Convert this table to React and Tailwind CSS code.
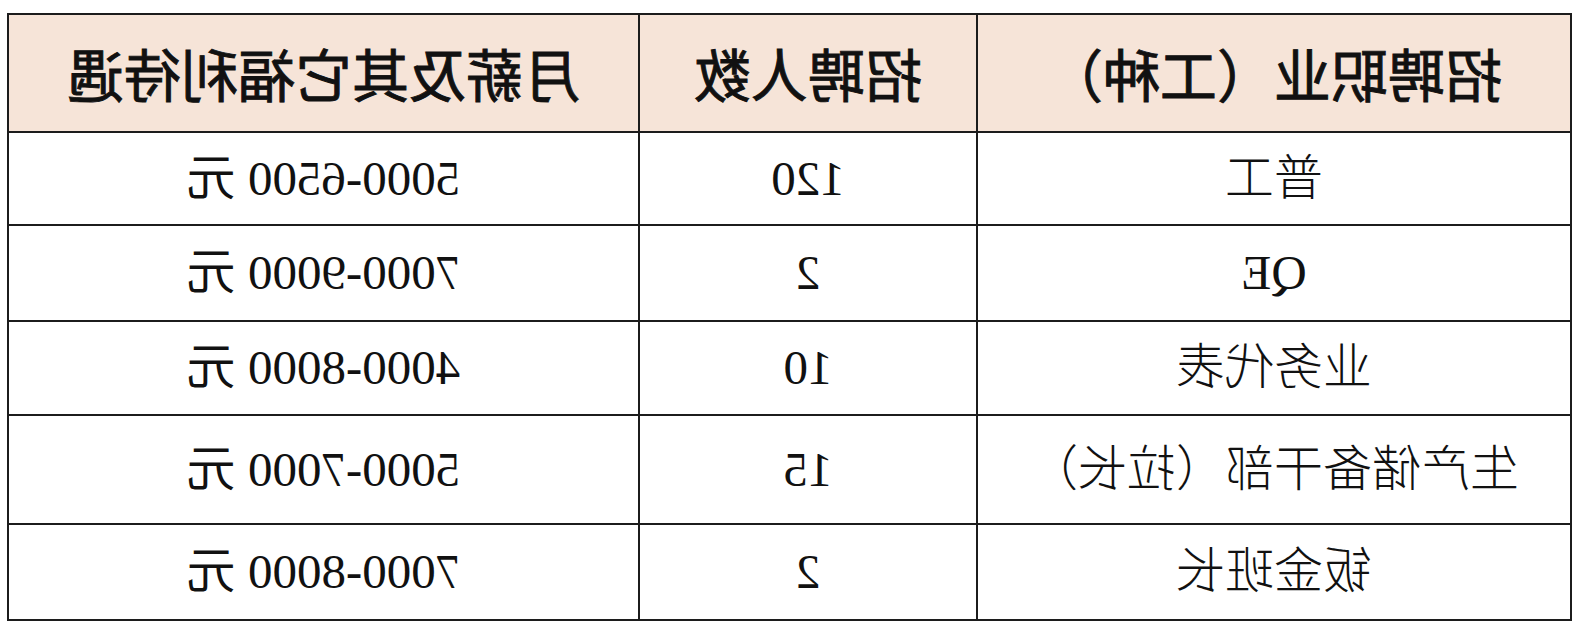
const rows = [
  { job: '普工', count: '120', pay: '5000-6500', h: 'h-[93px]' },
  { job: 'QE', count: '2', pay: '7000-9000', h: 'h-[96px]' },
  { job: '业务代表', count: '10', pay: '4000-8000', h: 'h-[94px]' },
  { job: '生产储备干部（拉长）', count: '15', pay: '5000-7000', h: 'h-[109px]' },
  { job: '钣金班长', count: '2', pay: '7000-8000', h: 'h-[96px]' },
]

const headCls = `border-2 border-[#1c1c1c] bg-[#f6e4d8] text-center text-[57px] font-normal text-[#111]
  [-webkit-text-stroke:0.9px_#111] font-['Noto_Sans_CJK_SC',sans-serif]`
const cellCls = `border-2 border-[#1c1c1c] text-center text-[49px] text-[#111]
  font-['Liberation_Serif','Noto_Sans_CJK_SC',serif]`

export default function App() {
  return (
    <div className="w-[1581px] h-[627px] bg-white overflow-hidden">
      {/* the reference is a mirrored picture, so the whole table is flipped */}
      <div className="w-full h-full -scale-x-100 pt-[13px] pl-[9px]">
        <table className="border-collapse table-fixed w-[1563px]">
          <colgroup>
            <col className="w-[594px]" />
            <col className="w-[338px]" />
            <col className="w-[631px]" />
          </colgroup>
          <thead>
            <tr className="h-[118px]">
              <th className={headCls}>招聘职业（工种）</th>
              <th className={headCls}>招聘人数</th>
              <th className={headCls}>月薪及其它福利待遇</th>
            </tr>
          </thead>
          <tbody>
            {rows.map(r => (
              <tr key={r.job} className={r.h}>
                <td className={cellCls + ' font-light'}>{r.job}</td>
                <td className={cellCls}>{r.count}</td>
                <td className={cellCls}>{r.pay} 元</td>
              </tr>
            ))}
          </tbody>
        </table>
      </div>
    </div>
  )
}
